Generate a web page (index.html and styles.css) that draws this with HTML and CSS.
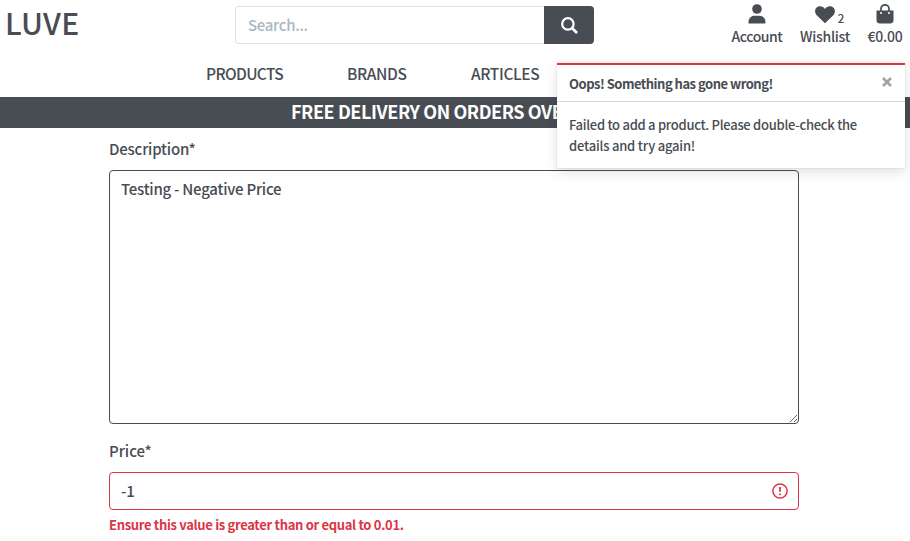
FILE: index.html
```html
<!DOCTYPE html>
<html lang="en">
<head>
<meta charset="utf-8">
<title>Luve</title>
<link rel="stylesheet" href="styles.css">
</head>
<body>
<header class="header">
  <a class="brand">LUVE</a>
  <form class="search">
    <input class="search-input" type="text" placeholder="Search..." aria-label="Search">
    <button class="search-button" type="button" aria-label="Search"><svg width="17" height="17" viewBox="0 0 17 17" fill="none" stroke="currentColor"><circle cx="6.9" cy="6.9" r="5.7" stroke-width="2.2"/><path d="M11 11l5 5" stroke-width="2.6"/></svg></button>
  </form>
  <div class="actions">
    <a class="action account"><span class="icon"><svg width="18" height="20" viewBox="0 0 18 20" fill="currentColor"><circle cx="9" cy="5" r="4.800"/><path d="M.5 19.500v-1.200c0-4 2.600-6.500 6-6.500h5c3.400 0 6 2.500 6 6.500v.4q0 .8-.8.800z"/></svg></span><span class="action-label account-label">Account</span></a>
    <a class="action wishlist"><span class="icon"><svg width="20" height="20" viewBox="0 0 20 20" fill="currentColor"><path d="M10 19.300L1.700 11.300C-1.500 7.800.3 2.300 5 2.300c2.200 0 3.800 1 5 2.600 1.200-1.600 2.800-2.600 5-2.600 4.700 0 6.500 5.500 3.300 9z"/></svg><small class="count">2</small></span><span class="action-label wishlist-label">Wishlist</span></a>
    <a class="action bag"><span class="icon"><svg width="18" height="20" viewBox="0 0 18 20"><path d="M.5 6.500h17V16a3.500 3.500 0 0 1-3.500 3.500H4A3.500 3.500 0 0 1 .5 16z" fill="currentColor"/><path d="M5 9V4.800a4 4 0 0 1 8 0V9" fill="none" stroke="currentColor" stroke-width="1.700"/><circle cx="5" cy="9" r="1" fill="#fff"/><circle cx="13" cy="9" r="1" fill="#fff"/></svg></span><span class="action-label bag-label">€0.00</span></a>
  </div>
</header>
<nav class="nav"><a class="nav-products">PRODUCTS</a><a class="nav-brands">BRANDS</a><a class="nav-articles">ARTICLES</a></nav>
<div class="banner"><span>FREE DELIVERY ON ORDERS OVER €50!</span></div>
<main class="form">
  <label class="label description-label" for="description">Description*</label>
  <textarea class="field description" id="description" spellcheck="false">Testing - Negative Price</textarea>
  <label class="label price-label" for="price">Price*</label>
  <div class="field price"><input class="price-input" id="price" value="-1"><svg width="16" height="16" viewBox="0 0 16 16" fill="none" stroke="currentColor"><circle cx="8" cy="8" r="7.100" stroke-width="1.500"/><path d="M8 4v4.800M8 10.600v1.600" stroke-width="1.800"/></svg></div>
  <strong class="error">Ensure this value is greater than or equal to 0.01.</strong>
</main>
<aside class="toast">
  <div class="toast-header"><strong class="toast-title">Oops! Something has gone wrong!</strong><svg class="close" width="10" height="10" viewBox="0 0 10 10" fill="none" stroke="currentColor" stroke-width="2.600"><path d="M1 1l8 8M9 1L1 9"/></svg></div>
  <p class="toast-body"><span class="body-first">Failed to add a product. Please double-check the</span><br><span class="body-second">details and try again!</span></p>
</aside>
</body>
</html>
```
FILE: styles.css
```css
* { box-sizing: border-box; }
body {
  margin: 0;
  height: 541px;
  overflow: hidden;
  background: #fff;
  color: #484c53;
  font: 500 15px/24px "Noto Sans CJK JP", "Noto Sans", sans-serif;
}
svg { display: block; flex: none; }
input, textarea, button { font: inherit; color: inherit; outline: 0; }
.header { display: flex; height: 57px; padding: 0 8px 0 5px; }
.brand { width: 230px; padding-top: 2px; font-size: 30px; line-height: 40px; letter-spacing: .3px; }
.search { display: flex; width: 359px; height: 38px; margin-top: 6px; }
.search-input { width: 309px; padding: 0 12px; border: 1px solid #dee2e6; border-right: 0; border-radius: 4px 0 0 4px; letter-spacing: -.3px; }
.search-input::placeholder { color: #aab7c4; opacity: 1; }
.search-button { display: flex; align-items: center; justify-content: center; width: 50px; padding: 0; border: 0; border-radius: 0 4px 4px 0; background: #484c53; color: #fff; }
.actions { display: flex; gap: 18px; margin-left: auto; padding-top: 4px; }
.action { display: flex; flex-direction: column; align-items: center; font-size: 14px; line-height: 24px; white-space: nowrap; }
.account, .wishlist { width: 50px; }
.bag { width: 34px; }
.icon { display: flex; height: 20px; gap: 3px; }
.wishlist .icon { padding-left: 9px; }
.account-label { letter-spacing: -.45px; }
.wishlist-label, .bag-label { letter-spacing: -.25px; }
.count { font-size: 11.5px; line-height: 28px; }
.nav { display: flex; height: 40px; padding: 4px 0 0 206px; font-size: 15.5px; line-height: 24px; }
.nav-products { width: 141px; letter-spacing: -.65px; }
.nav-brands { width: 124px; letter-spacing: -.35px; }
.nav-articles { letter-spacing: -.35px; }
.banner { height: 31px; padding-left: 291px; background: #484c53; color: #fff; font-size: 18px; font-weight: 700; line-height: 28px; letter-spacing: -.42px; white-space: nowrap; }
.form { width: 690px; margin-left: 109px; padding-top: 9px; }
.label { display: block; height: 24px; margin-bottom: 9px; }
.description-label { letter-spacing: -.2px; }
.field { display: block; width: 690px; border: 1px solid #484c53; border-radius: 4px; background: #fff; }
.description { height: 254px; margin-bottom: 15px; padding: 6px 11px; resize: vertical; letter-spacing: -.24px; }
.price { display: flex; align-items: center; height: 38px; padding: 0 10px 0 11px; border-color: #dc3545; color: #dc3545; }
.price-input { flex: 1; min-width: 0; padding: 0; border: 0; color: #484c53; background: transparent; }
.error { display: block; padding-top: 4px; color: #dc3545; font-size: 13px; font-weight: 700; line-height: 21px; letter-spacing: -.32px; white-space: nowrap; }
.toast { position: absolute; left: 557px; top: 63px; width: 348px; height: 105px; background: #fff; border-top: 2px solid #dc3545; box-shadow: 0 4px 12px rgba(0, 0, 0, .12), 0 0 1px rgba(0, 0, 0, .25); font-size: 13px; line-height: 21px; }
.toast-header { display: flex; justify-content: space-between; height: 37px; padding: 8px 13px 7px 12px; border-bottom: 1px solid #d8d8d8; }
.toast-title { font-weight: 700; letter-spacing: -.5px; }
.close { margin-top: 4px; color: #a3a3a3; }
.toast-body { margin: 0; padding: 12px; white-space: nowrap; }
.body-first { letter-spacing: -.28px; }
.body-second { letter-spacing: -.2px; }
```
